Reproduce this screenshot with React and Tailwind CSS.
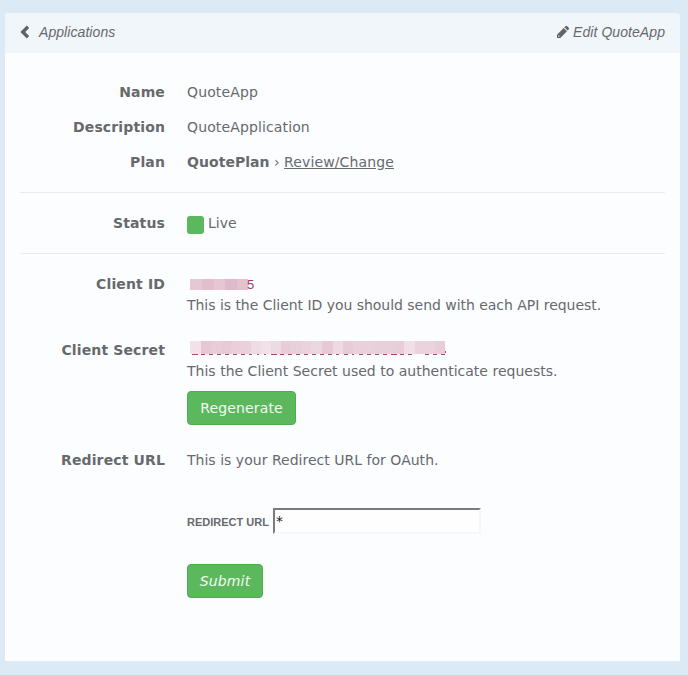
import React from "react";

const SECRET_TILES = [
  ["w-[11px]", "bg-[#f2e1e8]"], ["w-[10px]", "bg-[#e7c7d4]"], ["w-[10px]", "bg-[#e8ccd7]"],
  ["w-[10px]", "bg-[#e8cad6]"], ["w-[10px]", "bg-[#eacfda]"], ["w-[10px]", "bg-[#ead0da]"],
  ["w-[10px]", "bg-[#efdbe4]"], ["w-[10px]", "bg-[#f2e1e8]"], ["w-[10px]", "bg-[#eedae2]"],
  ["w-[10px]", "bg-[#e8cdd8]"], ["w-[10px]", "bg-[#e9cfda]"], ["w-[10px]", "bg-[#ead1db]"],
  ["w-[11px]", "bg-[#ecd6df]"], ["w-[11px]", "bg-[#e6c9d5]"], ["w-[10px]", "bg-[#eed9e2]"],
  ["w-[10px]", "bg-[#e7ccd7]"], ["w-[21px]", "bg-[#e9d0db]"], ["w-[20px]", "bg-[#e8cfd9]"],
  ["w-[10px]", "bg-[#e9ced9]"], ["w-[11px]", "bg-[#f0dfe6]"], ["w-[20px]", "bg-[#ead3dd]"],
  ["w-[10px]", "bg-[#e8cdd8]"],
];

function Row({ label, className, children }) {
  return (
    <div className={"flex " + className}>
      <div className="mr-[22px] w-[145px] shrink-0 text-right font-bold tracking-[0.13px]">{label}</div>
      <div>{children}</div>
    </div>
  );
}

function ClientId() {
  return (
    <div className="flex h-5 items-center pl-[3px]">
      <div className="flex h-[11px] w-[58px]">
        <span className="w-3 bg-[#e6c8d5]" />
        <span className="w-3 bg-[#e1bdcd]" />
        <span className="w-[11px] bg-[#e5c6d2]" />
        <span className="w-3 bg-[#e0b9ca]" />
        <span className="w-[11px] bg-[#e3c1cf]" />
      </div>
      <span className="-ml-px pt-px font-['Liberation_Sans',sans-serif] text-[13px] leading-5 text-[#b0375f]">5</span>
    </div>
  );
}

function ClientSecret() {
  return (
    <div className="h-5 pl-[3px] pt-px">
      <div className="flex h-[13px] w-[255px]">
        {SECRET_TILES.map(([w, bg], i) => (
          <span key={i} className={w + " shrink-0 " + bg} />
        ))}
      </div>
      <svg className="block overflow-visible" width="257" height="2" viewBox="0 0 257 2" fill="none" stroke="#ad4968">
        <path d="M2 .5H8M11 .5h4m4 0h4m4 0h4m4 0h4m4 0h4m4 0h4m4 0h3m5 0h2m5 0h2m5 0h6m3 0h4m4 0h4m4 0h4m4 0h4m4 0h4m4 0h4m4 0h4m4 0h3m5 0h4m4 0h2m5 0h4m4 0h4m4 0h4m4 0h4m4 0h6m3 0h4m4 0h4M235 .5h4m4 0h4m4 0h4M255.5 -3v2" />
      </svg>
    </div>
  );
}

export default function App() {
  return (
    <div className="h-[675px] w-[688px] bg-[#dceaf5] pl-[5px] pt-[13px] font-['DejaVu_Sans',sans-serif] text-[14px] leading-5 text-[#67696c]">
      <main className="h-[648px] w-[675px] overflow-hidden rounded-t-[4px] bg-[#fcfdff] pb-px">
        <header className="flex h-10 items-center justify-between bg-[#f1f6fa] px-[15px] pb-[2px] font-['Liberation_Sans',sans-serif] italic tracking-[0.07px]">
          <a className="flex items-center">
            <svg className="mr-[9px]" width="10" height="14" viewBox="0 0 10 14" fill="none">
              <path d="M8 1.8 2.8 7 8 12.2" stroke="#606468" strokeWidth="3.5" />
            </svg>
            Applications
          </a>
          <a className="flex items-center">
            <svg className="mr-1" width="12" height="14" viewBox="0 0 12 14" fill="#606468">
              <path fillRule="evenodd" d="M0 13V9.7L6.7 3 10 6.3 3.3 13H0Zm1.2-2v.8H2l.7-.7-.8-.8-.7.7ZM7.4 2.3 8.8.9q.6-.5 1.2 0l2 2q.5.6 0 1.2l-1.4 1.4-3.2-3.2Z" />
            </svg>
            Edit QuoteApp
          </a>
        </header>

        <div className="px-[15px] pt-[29px]">
          <Row label="Name" className="mb-[15px] tracking-[0.13px]">QuoteApp</Row>
          <Row label="Description" className="mb-[15px] tracking-[0.13px]">QuoteApplication</Row>
          <Row label="Plan" className="mb-5">
            <b className="tracking-[0.05px]">QuotePlan</b> › <a className="underline tracking-[0.12px]">Review/Change</a>
          </Row>
          <hr className="mb-5 border-[#e9ebee]" />
          <Row label="Status" className="mb-5">
            <div className="flex h-5">
              <span className="mr-1 mt-[3px] h-[18px] w-[17px] rounded-[3px] bg-[#5cb85c]" />
              Live
            </div>
          </Row>
          <hr className="mb-5 border-[#e9ebee]" />
          <Row label="Client ID" className="mb-[25px]">
            <ClientId />
            <p className="mt-px tracking-[-0.035px]">This is the Client ID you should send with each API request.</p>
          </Row>
          <Row label="Client Secret" className="mb-[25px]">
            <ClientSecret />
            <p className="mt-px tracking-[0.015px]">This the Client Secret used to authenticate requests.</p>
            <button className="mt-[10px] block h-[34px] w-[109px] rounded-[4px] border border-[#4cae4c] bg-[#5cb85c] tracking-[0.15px] text-[#f3fbf3]">
              Regenerate
            </button>
          </Row>
          <Row label="Redirect URL" className="">
            <p className="tracking-[0.02px]">This is your Redirect URL for OAuth.</p>
            <label className="mt-[38px] flex h-[26px] items-center font-['Liberation_Sans',sans-serif] text-[11px] font-bold">
              <span className="w-[86px] pt-px">REDIRECT URL</span>
              <input
                defaultValue="*"
                className="h-[26px] w-[208px] border-2 border-b-[#f6f7f9] border-l-[#7b7b7b] border-r-[#f6f7f9] border-t-[#7b7b7b] bg-[#fefefe] px-px font-['DejaVu_Sans',sans-serif] text-[14px] font-normal text-[#222]"
              />
            </label>
            <button className="mt-[30px] block h-[34px] w-[76px] rounded-[4px] border border-[#4cae4c] bg-[#5cb85c] italic tracking-[0.15px] text-[#f3fbf3]">
              Submit
            </button>
          </Row>
        </div>
      </main>
    </div>
  );
}
